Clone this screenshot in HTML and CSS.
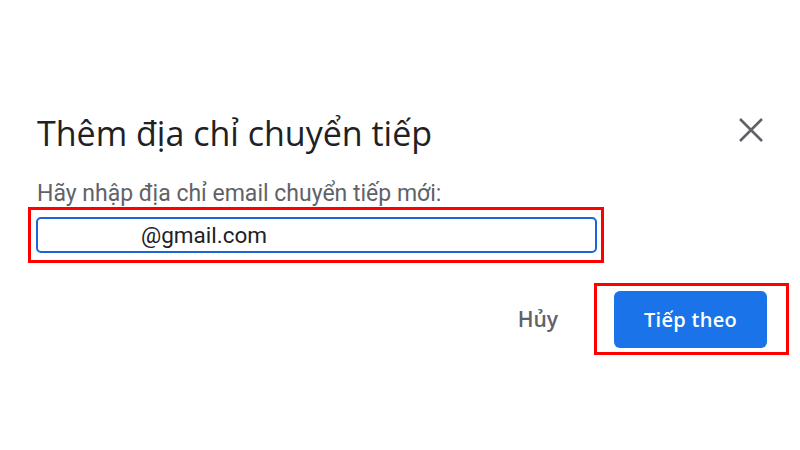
FILE: index.html
```html
<!DOCTYPE html>
<html lang="vi">
<head>
    <meta charset="UTF-8">
    <meta name="viewport" content="width=device-width, initial-scale=1.0">
    <title>Thêm địa chỉ chuyển tiếp</title>
    <link rel="stylesheet" href="styles.css">
</head>
<body>
    <div class="dialog">
        <div class="dialog-header">
            <h1>Thêm địa chỉ chuyển tiếp</h1>
            <button class="close-btn" aria-label="Đóng">
                <svg width="26" height="26" viewBox="0 0 26 26">
                    <path d="M2 2 L24 24 M24 2 L2 24" stroke="#5f6368" stroke-width="2.6" fill="none"/>
                </svg>
            </button>
        </div>
        <label class="field-label" for="email">Hãy nhập địa chỉ email chuyển tiếp mới:</label>
        <div class="mark mark-field">
            <input type="text" id="email" value="@gmail.com">
        </div>
        <div class="actions">
            <button class="btn-text">Hủy</button>
            <div class="mark mark-btn">
                <button class="btn-primary">Tiếp theo</button>
            </div>
        </div>
    </div>
</body>
</html>
```

FILE: styles.css
```css
body {
    margin: 0;
    padding: 0;
    background-color: #fff;
    font-family: Roboto, "Liberation Sans", sans-serif;
}
.dialog {
    padding: 107px 11px 0 37px;
}
.dialog-header {
    display: flex;
    justify-content: space-between;
    align-items: flex-start;
    padding-right: 25px;
}
h1 {
    margin: 0;
    font-family: "Open Sans", Roboto, sans-serif;
    font-weight: 400;
    font-size: 34px;
    color: #202124;
    line-height: 52px;
}
.close-btn {
    background: none;
    border: none;
    padding: 0;
    margin-top: 10px;
    width: 26px;
    height: 26px;
    cursor: pointer;
}
.field-label {
    display: block;
    margin-top: 22px;
    font-size: 23px;
    color: #5f6368;
    line-height: 26px;
}
.mark {
    border: 3px solid #f00;
    box-sizing: border-box;
}
.mark-field {
    width: 576px;
    margin-left: -9px;
    padding: 7px 4px 7px 5px;
}
.mark-field input {
    display: block;
    box-sizing: border-box;
    width: 100%;
    height: 36px;
    border: 2px solid #1a66d9;
    border-radius: 5px;
    padding: 0 8px;
    text-indent: 95px;
    font-family: Roboto, sans-serif;
    font-size: 22.5px;
    color: #202124;
    outline: none;
}
.actions {
    display: flex;
    justify-content: flex-end;
    align-items: center;
    margin-top: 20px;
}
.btn-text {
    background: none;
    border: none;
    font-family: "Open Sans", Roboto, sans-serif;
    font-weight: 600;
    font-size: 21px;
    color: #5f6368;
    padding: 0;
    margin-right: 36px;
    cursor: pointer;
}
.mark-btn {
    position: relative;
    padding: 5px 19px 4px 17px;
}
.mark-btn::after {
    content: "";
    position: absolute;
    display: block;
    left: 187px;
    top: 83px;
    width: 11px;
    height: 3px;
    background-color: #f33;
}
.btn-primary {
    display: block;
    width: 153px;
    height: 57px;
    background-color: #1a73e8;
    color: #fff;
    border: none;
    border-radius: 6px;
    font-family: "Open Sans", Roboto, sans-serif;
    font-weight: 600;
    font-size: 20px;
    letter-spacing: 0.3px;
    cursor: pointer;
}
```
